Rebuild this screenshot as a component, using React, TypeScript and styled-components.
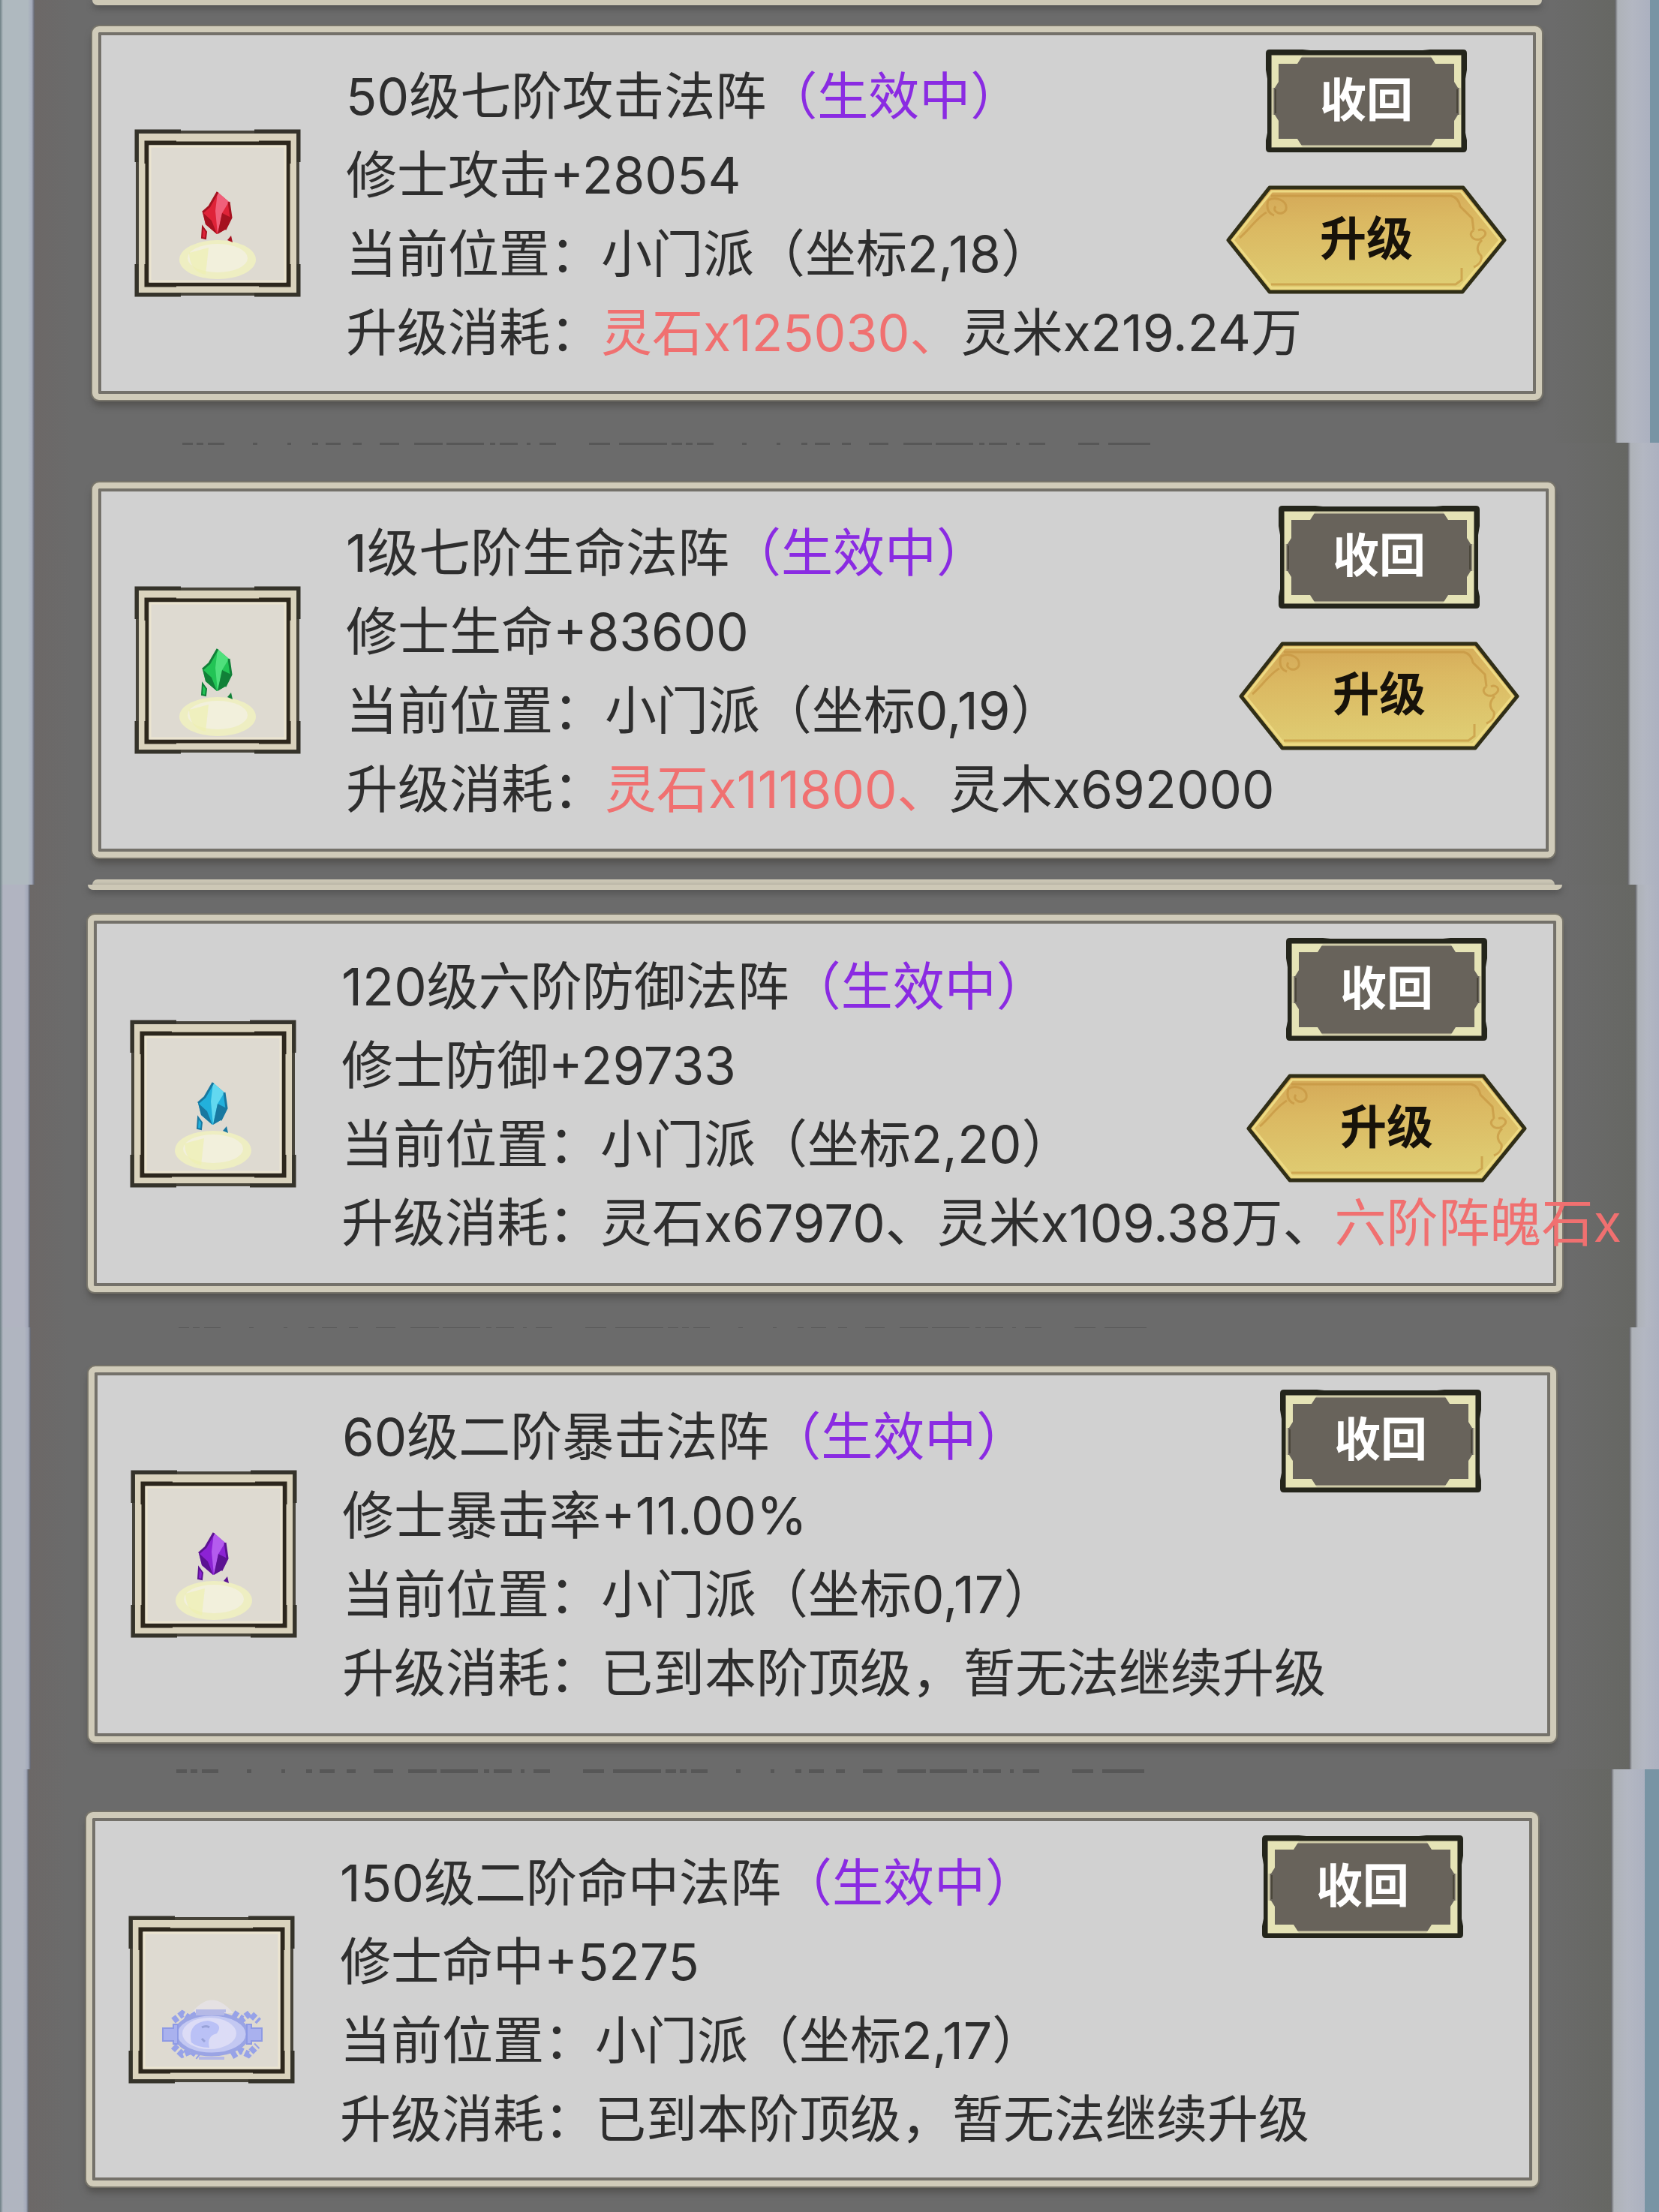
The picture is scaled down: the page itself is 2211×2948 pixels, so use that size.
import React from "react";
import styled, { createGlobalStyle } from "styled-components";

const GlobalStyle = createGlobalStyle`
  *, *::before, *::after { box-sizing: border-box; }
  body { margin: 0; background: #6a6a6a; }
`;

const uiFont = `Inter, "Noto Sans CJK SC", sans-serif`;
const brushFont = `"Kaiti SC", STKaiti, "Noto Sans CJK SC", sans-serif`;

const Page = styled.main`
  display: flex;
  flex-direction: column;
  min-height: 100vh;
  overflow: hidden;
  font-family: ${uiFont};
  color: #2e2e2e;
`;

const Strip = styled.section<{ $left: number; $right: number }>`
  flex: 1 0 0;
  display: grid;
  grid-template-columns: ${(p) => p.$left}px minmax(0, 1fr) ${(p) => p.$right}px;
`;

const LeftRail = styled.div<{ $tone: string }>`
  background: linear-gradient(90deg, #6d8085 0, ${(p) => p.$tone} 4px, ${(p) => p.$tone} 80%, #a3a9ba 92%, #5f626c 100%);
`;

const RightRail = styled.div<{ $edge: number }>`
  background: linear-gradient(90deg, #5c5c5e 0, #aeb2b8 4px, #b3b7c2 50%, #acb1c0 100%);
  border-right: ${(p) => p.$edge}px solid #7894a4;
`;

const Board = styled.div`
  display: flex;
  flex-direction: column;
  min-width: 0;
  padding: 0 97px 0 77px;
  background: linear-gradient(90deg, #6c6867 0, #6b6b6b 50px, #6b6b6b 96%, #666763 100%);
`;

const Seam = styled.div<{ $height: number }>`
  height: ${(p) => p.$height}px;
  flex: none;
`;

const Sliver = styled.div<{ $side: "top" | "bottom" }>`
  height: 7px;
  margin-top: ${(p) => (p.$side === "top" ? "0" : "auto")};
  background: #cdc8b6;
  border-radius: ${(p) => (p.$side === "top" ? "0 0 8px 8px" : "8px 8px 0 0")};
  box-shadow: ${(p) => (p.$side === "top" ? "0 4px 8px #4e4e4e" : "none")};
`;

const Card = styled.article<{ $height: number }>`
  display: flex;
  align-items: center;
  flex: none;
  min-height: ${(p) => p.$height}px;
  padding: 0 39px 0 48px;
  background: #d1d1d1;
  border: 8px solid #d0cbb9;
  border-radius: 9px;
  box-shadow: inset 0 0 0 4px #74716a, 0 0 0 2px #77746a, 0 8px 10px #535250;
`;

const Frame = styled.svg`
  display: block;
  flex: none;
  width: 222px;
  height: 224px;
`;

const Info = styled.div<{ $size: number }>`
  flex: 1;
  min-width: 0;
  padding-top: 4px;
  margin-left: 60px;
  font-size: ${(p) => p.$size}px;
  line-height: 105px;
  white-space: nowrap;
`;

const Title = styled.h2`
  margin: 0;
  font: inherit;
`;

const Line = styled.p`
  margin: 0;
`;

const Active = styled.span`
  color: #8a2be2;
`;

const Lack = styled.span`
  color: #f07070;
`;

const Actions = styled.div`
  display: flex;
  flex-direction: column;
  align-items: center;
  align-self: flex-start;
  flex: none;
  gap: 43px;
  width: 374px;
  padding-top: 22px;
`;

const ActionButton = styled.button<{ $kind: "recall" | "upgrade" }>`
  display: grid;
  place-items: center;
  width: ${(p) => (p.$kind === "recall" ? 270 : 374)}px;
  height: ${(p) => (p.$kind === "recall" ? 139 : 145)}px;
  padding: 0;
  border: 0;
  background: none;
  color: ${(p) => (p.$kind === "recall" ? "#ffffff" : "#17120a")};
  font-family: ${brushFont};
  font-size: 62px;
  font-weight: 700;
  line-height: 80px;
  cursor: pointer;

  & > * { grid-area: 1 / 1; }
`;

const Label = styled.span`
  padding-bottom: 12px;
`;

const Scraps = styled.svg`
  display: block;
  width: 1290px;
  margin-left: 120px;
`;

type Tone = { light: string; mid: string; dark: string };

function Crystal({ tone }: { tone: Tone }) {
  return (
    <g>
      <ellipse cx="111" cy="174" rx="51" ry="26" fill="#eeeec2" />
      <ellipse cx="111" cy="172" rx="40" ry="19" fill="#f2f0dc" />
      <path d="M73 165 Q74 190 95 194 L99 158 Z" fill="#eef0b0" opacity=".7" />
      <path d="M91 130 L96 137 L95 146 L90 145 Z" fill={tone.mid} stroke={tone.dark} strokeWidth="2" />
      <path d="M124 148 L129 142 L131 151 Z" fill={tone.dark} />
      <path d="M111 84 L126 97 L129 118 L121 134 L110 140 L95 127 L91 111 L100 103 Z" fill={tone.mid} />
      <path d="M111 84 L126 97 L117 112 L111 140 L108 109 Z" fill={tone.light} />
      <path d="M117 112 L129 118 L121 134 L111 140 Z" fill={tone.dark} />
      <path d="M91 111 L103 122 L110 140 L95 127 Z" fill={tone.dark} />
      <path d="M126 97 L129 118 L121 134 M111 84 L100 103 L91 111" fill="none" stroke={tone.dark} strokeWidth="3" />
    </g>
  );
}

function Disc() {
  return (
    <g>
      <path d="M84 130 Q111 95 140 130 Z" fill="#e9e6ee" opacity=".6" />
      <path d="M60 140 l12 -9 10 6 12 -8 M140 130 l12 8 10 -8 12 11 M60 174 l12 11 12 -5 10 8 M138 187 l12 -7 10 5 12 -12" fill="none" stroke="#97a2e8" strokeWidth="9" strokeDasharray="7 3" />
      <ellipse cx="111" cy="158" rx="48" ry="27" fill="#c3c8f2" stroke="#9aa4e4" strokeWidth="5" />
      <path d="M46 150 h14 v-5 h6 v26 h-6 v-4 h-14 Z M178 150 h-14 v-5 h-6 v26 h6 v-4 h14 Z" fill="#a9b1ee" stroke="#8e9ae4" strokeWidth="2" />
      <ellipse cx="108" cy="157" rx="36" ry="21" fill="#dcdcf6" />
      <path d="M84 169 Q78 143 106 140 Q128 144 118 157 Q104 160 108 176 Q92 176 84 169 Z" fill="#bac1f6" />
      <path d="M98 149 q6 -3 10 0 M102 168 l-4 -4" fill="none" stroke="#98a2d8" strokeWidth="3" />
      <path d="M90 127 h40 M90 131 h38 M94 190 h34" stroke="#b5b9e6" strokeWidth="4" />
    </g>
  );
}

function ArrayIcon({ tone }: { tone?: Tone }) {
  return (
    <Frame viewBox="0 0 222 224" aria-hidden="true">
      <rect x="4" y="4" width="214" height="216" fill="#dad3bd" stroke="#47443a" strokeWidth="4" />
      <path d="M3 44 V3 H62 M160 3 H219 V44 M219 180 V221 H160 M62 221 H3 V180" fill="none" stroke="#35332a" strokeWidth="5" />
      <rect x="17" y="19" width="188" height="188" fill="#dedad1" stroke="#2d271c" strokeWidth="5" />
      <rect x="21" y="23" width="180" height="180" fill="none" stroke="#ebe4d0" strokeWidth="3" />
      <path d="M15 46 V17 H56 M166 17 H207 V46 M207 180 V209 H166 M56 209 H15 V180" fill="none" stroke="#2d271c" strokeWidth="3" />
      {tone ? <Crystal tone={tone} /> : <Disc />}
    </Frame>
  );
}

function RecallPlate() {
  return (
    <svg width="270" height="139" viewBox="0 0 270 139" aria-hidden="true">
      <path d="M6 1 H50 L60 2 H210 L220 1 H264 Q269 1 269 6 V28 L267 40 V112 L269 122 V133 Q269 138 264 138 H6 Q1 138 1 133 V122 L3 112 V40 L1 28 V6 Q1 1 6 1 Z" fill="#24251b" />
      <rect x="10" y="10" width="250" height="120" fill="#68635b" stroke="#cfcba8" strokeWidth="3" />
      <path d="M9 9 H50 L43 20 H18 V44 L13 52 H9 Z M261 9 H220 L227 20 H252 V44 L257 52 H261 Z M9 131 H50 L43 120 H18 V96 L13 88 H9 Z M261 131 H220 L227 120 H252 V96 L257 88 H261 Z" fill="#e5e3b6" />
      <path d="M14 54 V86 M256 54 V86" stroke="#4a463a" strokeWidth="2" />
    </svg>
  );
}

function UpgradePlate() {
  return (
    <svg width="374" height="145" viewBox="0 0 374 145" aria-hidden="true">
      <defs>
        <linearGradient id="gold" x1="0" y1="0" x2="0.15" y2="1">
          <stop offset="0" stopColor="#d3a656" />
          <stop offset="0.4" stopColor="#dbb962" />
          <stop offset="1" stopColor="#dfcd73" />
        </linearGradient>
      </defs>
      <path d="M58 3 H316 L371 73 L315 142 H58 L3 73 Z" fill="url(#gold)" stroke="#302e17" strokeWidth="5" strokeLinejoin="round" />
      <path d="M61 8 H313 L365 73 L312 137 H61 L9 73 Z" fill="none" stroke="#edda83" strokeWidth="3" />
      <path d="M56 20 C66 14 82 20 80 32 C76 42 60 36 66 28 M56 20 Q52 36 64 40 M54 36 C42 42 30 60 18 70 M60 14 H300 Q310 17 312 28 L328 44 L330 60 M330 60 C322 64 328 74 338 72 C352 66 344 56 336 60 M341 73 Q330 84 340 94 Q342 104 330 109 M60 132 H306 L314 126 V110" fill="none" stroke="#c4933f" strokeWidth="3" opacity=".65" />
    </svg>
  );
}

type Part = { text: string; lack?: boolean };
type Formation = {
  name: string;
  bonus: string;
  spot: string;
  cost: Part[];
  tone?: Tone;
  upgrade?: boolean;
  size: number;
  left: number;
  right: number;
  edge: number;
  rail: string;
  top: number;
  height: number;
  scraps?: number;
  sliver?: "top" | "bottom";
};

const maxed: Part[] = [{ text: "已到本阶顶级，暂无法继续升级" }];

const formations: Formation[] = [
  {
    name: "50级七阶攻击法阵", bonus: "修士攻击+28054", spot: "小门派（坐标2,18）",
    cost: [{ text: "灵石x125030、", lack: true }, { text: "灵米x219.24万" }],
    tone: { light: "#f0607a", mid: "#df2338", dark: "#a51220" },
    upgrade: true, size: 68, left: 46, right: 59, edge: 12, rail: "#afb9bf", top: 35, height: 498, sliver: "top",
  },
  {
    name: "1级七阶生命法阵", bonus: "修士生命+83600", spot: "小门派（坐标0,19）",
    cost: [{ text: "灵石x111800、", lack: true }, { text: "灵木x692000" }],
    tone: { light: "#4fe07c", mid: "#22c455", dark: "#118038" },
    upgrade: true, size: 69, left: 46, right: 42, edge: 0, rail: "#afb9bf", top: 53, height: 500, scraps: 3, sliver: "bottom",
  },
  {
    name: "120级六阶防御法阵", bonus: "修士防御+29733", spot: "小门派（坐标2,20）",
    cost: [{ text: "灵石x67970、灵米x109.38万、" }, { text: "六阶阵魄石x", lack: true }],
    tone: { light: "#62d8f0", mid: "#22b0dc", dark: "#1878a0" },
    upgrade: true, size: 69, left: 40, right: 32, edge: 0, rail: "#b1b4c1", top: 40, height: 503, sliver: "top",
  },
  {
    name: "60级二阶暴击法阵", bonus: "修士暴击率+11.00%", spot: "小门派（坐标0,17）",
    cost: maxed,
    tone: { light: "#b45cee", mid: "#8c22d4", dark: "#5c1292" },
    size: 69, left: 41, right: 40, edge: 0, rail: "#b0b5c0", top: 52, height: 501, scraps: 1,
  },
  {
    name: "150级二阶命中法阵", bonus: "修士命中+5275", spot: "小门派（坐标2,17）",
    cost: maxed,
    size: 68, left: 38, right: 64, edge: 19, rail: "#b0b5c0", top: 57, height: 499, scraps: 5,
  },
];

export default function App() {
  return (
    <Page>
      <GlobalStyle />
      {formations.map((f) => (
        <Strip key={f.name} $left={f.left} $right={f.right}>
          <LeftRail $tone={f.rail} />
          <Board>
            <Seam $height={f.top}>
              {f.sliver && f.sliver === "top" && <Sliver $side="top" />}
              {f.scraps && (
                <Scraps height={f.scraps} viewBox={`0 0 1290 ${f.scraps}`} preserveAspectRatio="none" aria-hidden="true">
                  <path
                    d="M0 1 H1290"
                    stroke="#3f3f3f"
                    strokeWidth={f.scraps * 2}
                    strokeDasharray="14 5 9 6 22 38 6 40 5 28 8 10 20 16 12 24 26 20 38 5 50 8 7 6 24 12 5 12 22 44 28 12 64 6"
                    opacity=".45"
                  />
                </Scraps>
              )}
            </Seam>
            <Card $height={f.height}>
              <ArrayIcon tone={f.tone} />
              <Info $size={f.size}>
                <Title>{f.name}<Active>（生效中）</Active></Title>
                <Line>{f.bonus}</Line>
                <Line>当前位置：{f.spot}</Line>
                <Line>
                  升级消耗：
                  {f.cost.map((c) => (c.lack ? <Lack key={c.text}>{c.text}</Lack> : <span key={c.text}>{c.text}</span>))}
                </Line>
              </Info>
              <Actions>
                <ActionButton type="button" $kind="recall"><RecallPlate /><Label>收回</Label></ActionButton>
                {f.upgrade && (
                  <ActionButton type="button" $kind="upgrade"><UpgradePlate /><Label>升级</Label></ActionButton>
                )}
              </Actions>
            </Card>
            {f.sliver === "bottom" && <Sliver $side="bottom" />}
          </Board>
          <RightRail $edge={f.edge} />
        </Strip>
      ))}
    </Page>
  );
}
